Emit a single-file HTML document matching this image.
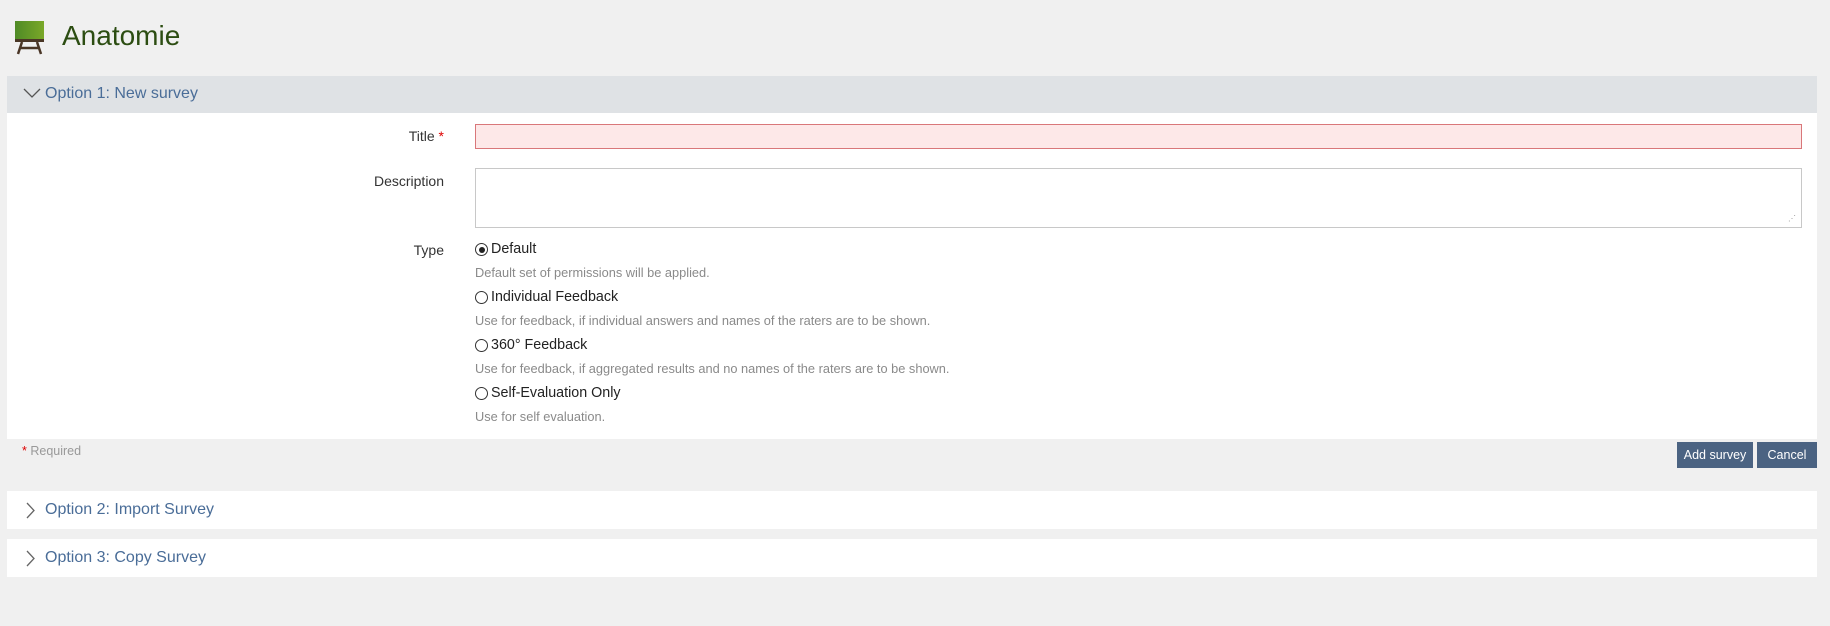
<!DOCTYPE html>
<html><head><style>
body{margin:0;width:1830px;height:626px;background:#f0f0f0;font-family:"Liberation Sans",sans-serif;position:relative;overflow:hidden}
.a{position:absolute}
.hdr{color:#4a6d98;font-size:16px}
.lbl{color:#333;font-size:14px;text-align:right;width:200px}
.opt{color:#222;font-size:14.3px;left:475px}
.help{color:#8a8a8a;font-size:12.8px;left:475px}
.rad{position:absolute;left:-16px;top:2px;width:11px;height:11px;border:1px solid #333;border-radius:50%;background:#fff}
.rad.on::after{content:"";position:absolute;left:2.5px;top:2.5px;width:6px;height:6px;border-radius:50%;background:#222}
.btn{background:#4b6382;color:#fff;font-size:12.5px;text-align:center;line-height:26px;height:26px}
</style></head><body>
<svg class="a" style="left:15px;top:21px" width="29" height="34" viewBox="0 0 29 34"><defs><linearGradient id="g" x1="0" x2="1"><stop offset="0" stop-color="#4f8a26"/><stop offset="1" stop-color="#7aa828"/></linearGradient></defs><rect x="0" y="0" width="29" height="18" fill="url(#g)"/><rect x="0" y="18" width="29" height="3" fill="#4a3626"/><path d="M7 21 L3 33 M22 21 L26 33 M5 27 H24" stroke="#4a3626" stroke-width="2.5" fill="none"/></svg>
<div class="a" style="left:62px;top:20px;font-size:28px;color:#2c4d12">Anatomie</div>
<div class="a" style="left:7px;top:76px;width:1810px;height:37px;background:#dfe2e5"></div>
<svg class="a" style="left:23px;top:88px" width="18" height="11"><path d="M1 1 L9 9 L17 1" stroke="#555" stroke-width="1.3" fill="none"/></svg>
<div class="a hdr" style="left:45px;top:85px">Option 1: New survey</div>
<div class="a" style="left:7px;top:113px;width:1810px;height:326px;background:#fff"></div>
<div class="a lbl" style="left:244px;top:128px">Title <span style="color:#d00">*</span></div>
<div class="a" style="left:475px;top:124px;width:1325px;height:23px;background:#fde8e8;border:1px solid #d9777a"></div>
<div class="a lbl" style="left:244px;top:173px">Description</div>
<div class="a" style="left:475px;top:168px;width:1325px;height:58px;background:#fff;border:1px solid #c8c8c8"></div>
<div class="a lbl" style="left:244px;top:242px">Type</div>
<div class="a opt" style="left:491px;top:241px"><span class="rad on"></span>Default</div>
<div class="a help" style="left:475px;top:265px">Default set of permissions will be applied.</div>
<div class="a opt" style="left:491px;top:289px"><span class="rad"></span>Individual Feedback</div>
<div class="a help" style="left:475px;top:313px">Use for feedback, if individual answers and names of the raters are to be shown.</div>
<div class="a opt" style="left:491px;top:337px"><span class="rad"></span>360° Feedback</div>
<div class="a help" style="left:475px;top:361px">Use for feedback, if aggregated results and no names of the raters are to be shown.</div>
<div class="a opt" style="left:491px;top:385px"><span class="rad"></span>Self-Evaluation Only</div>
<div class="a help" style="left:475px;top:409px">Use for self evaluation.</div>
<div class="a" style="left:22px;top:444px;font-size:12.5px;color:#999"><span style="color:#d00">*</span> Required</div>
<div class="a btn" style="left:1677px;top:442px;width:76px">Add survey</div>
<div class="a btn" style="left:1757px;top:442px;width:60px">Cancel</div>
<div class="a" style="left:7px;top:491px;width:1810px;height:38px;background:#fff"></div>
<svg class="a" style="left:26px;top:502px" width="10" height="17"><path d="M1 1 L8 8.5 L1 16" stroke="#666" stroke-width="1.3" fill="none"/></svg>
<div class="a hdr" style="left:45px;top:501px">Option 2: Import Survey</div>
<div class="a" style="left:7px;top:539px;width:1810px;height:38px;background:#fff"></div>
<svg class="a" style="left:26px;top:550px" width="10" height="17"><path d="M1 1 L8 8.5 L1 16" stroke="#666" stroke-width="1.3" fill="none"/></svg>
<div class="a hdr" style="left:45px;top:549px">Option 3: Copy Survey</div>
<div class="a" style="left:1788px;top:214px;font-size:8px;color:#999">⋰</div>
</body></html>
